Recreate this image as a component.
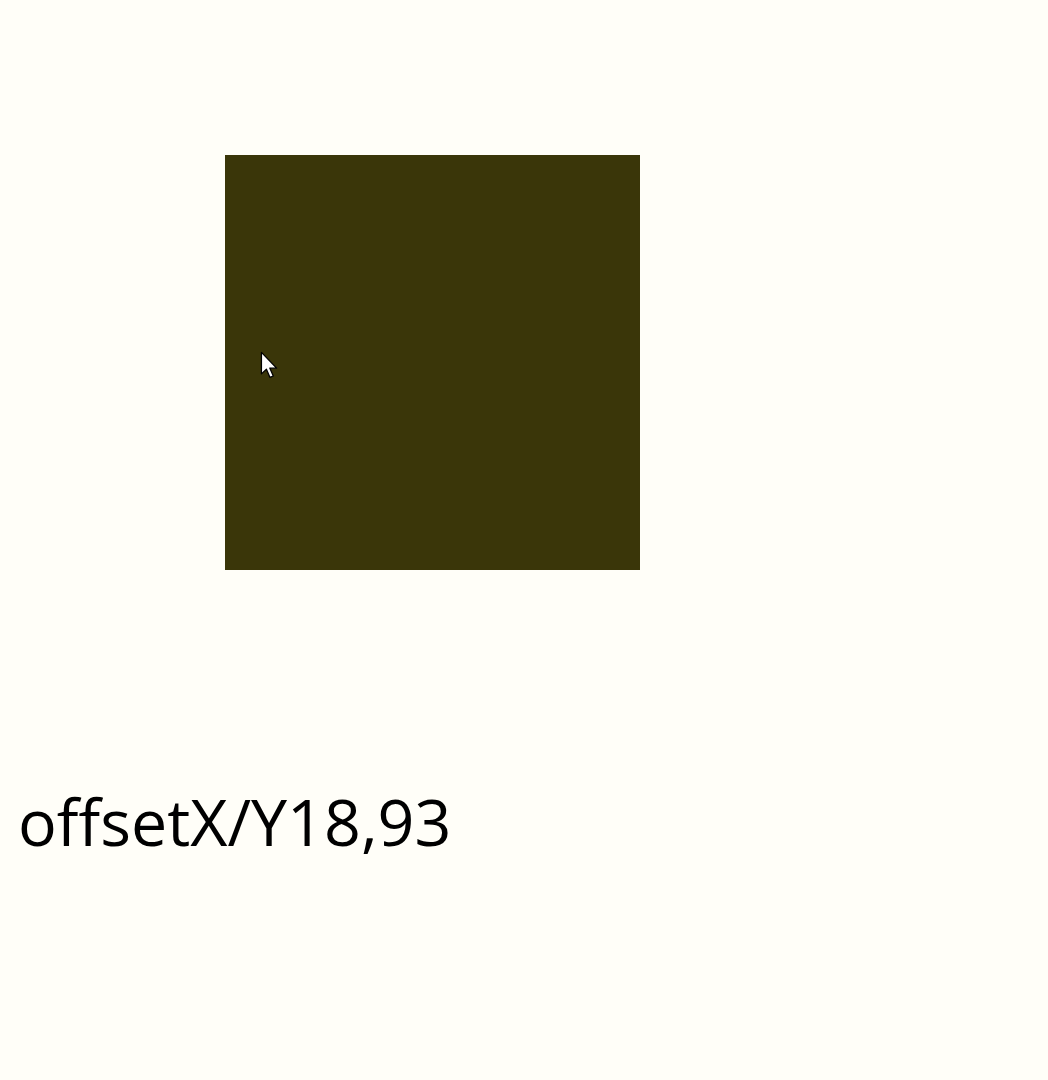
export default function App() {
  return (
    <div className="min-h-[1080px] w-full bg-[#fffef8] pt-[155px]" style={{ fontFamily: '"Open Sans", "Noto Sans", sans-serif' }}>
      <div className="relative ml-[225px] h-[415px] w-[415px] bg-[#3a3609]">
        <svg className="absolute left-[35px] top-[196px]" width="20" height="30" viewBox="0 0 14 21">
          <path d="M1 1 L1 16 L4.5 12.8 L7 18.5 L9.3 17.5 L6.9 12 L11.6 12 Z" fill="#fff" stroke="#000" strokeWidth="0.9" strokeLinejoin="round" />
        </svg>
      </div>
      <div className="mt-[211px] pl-[18px] text-[64.5px] leading-[80px] text-black">offsetX/Y18,93</div>
    </div>
  );
}
